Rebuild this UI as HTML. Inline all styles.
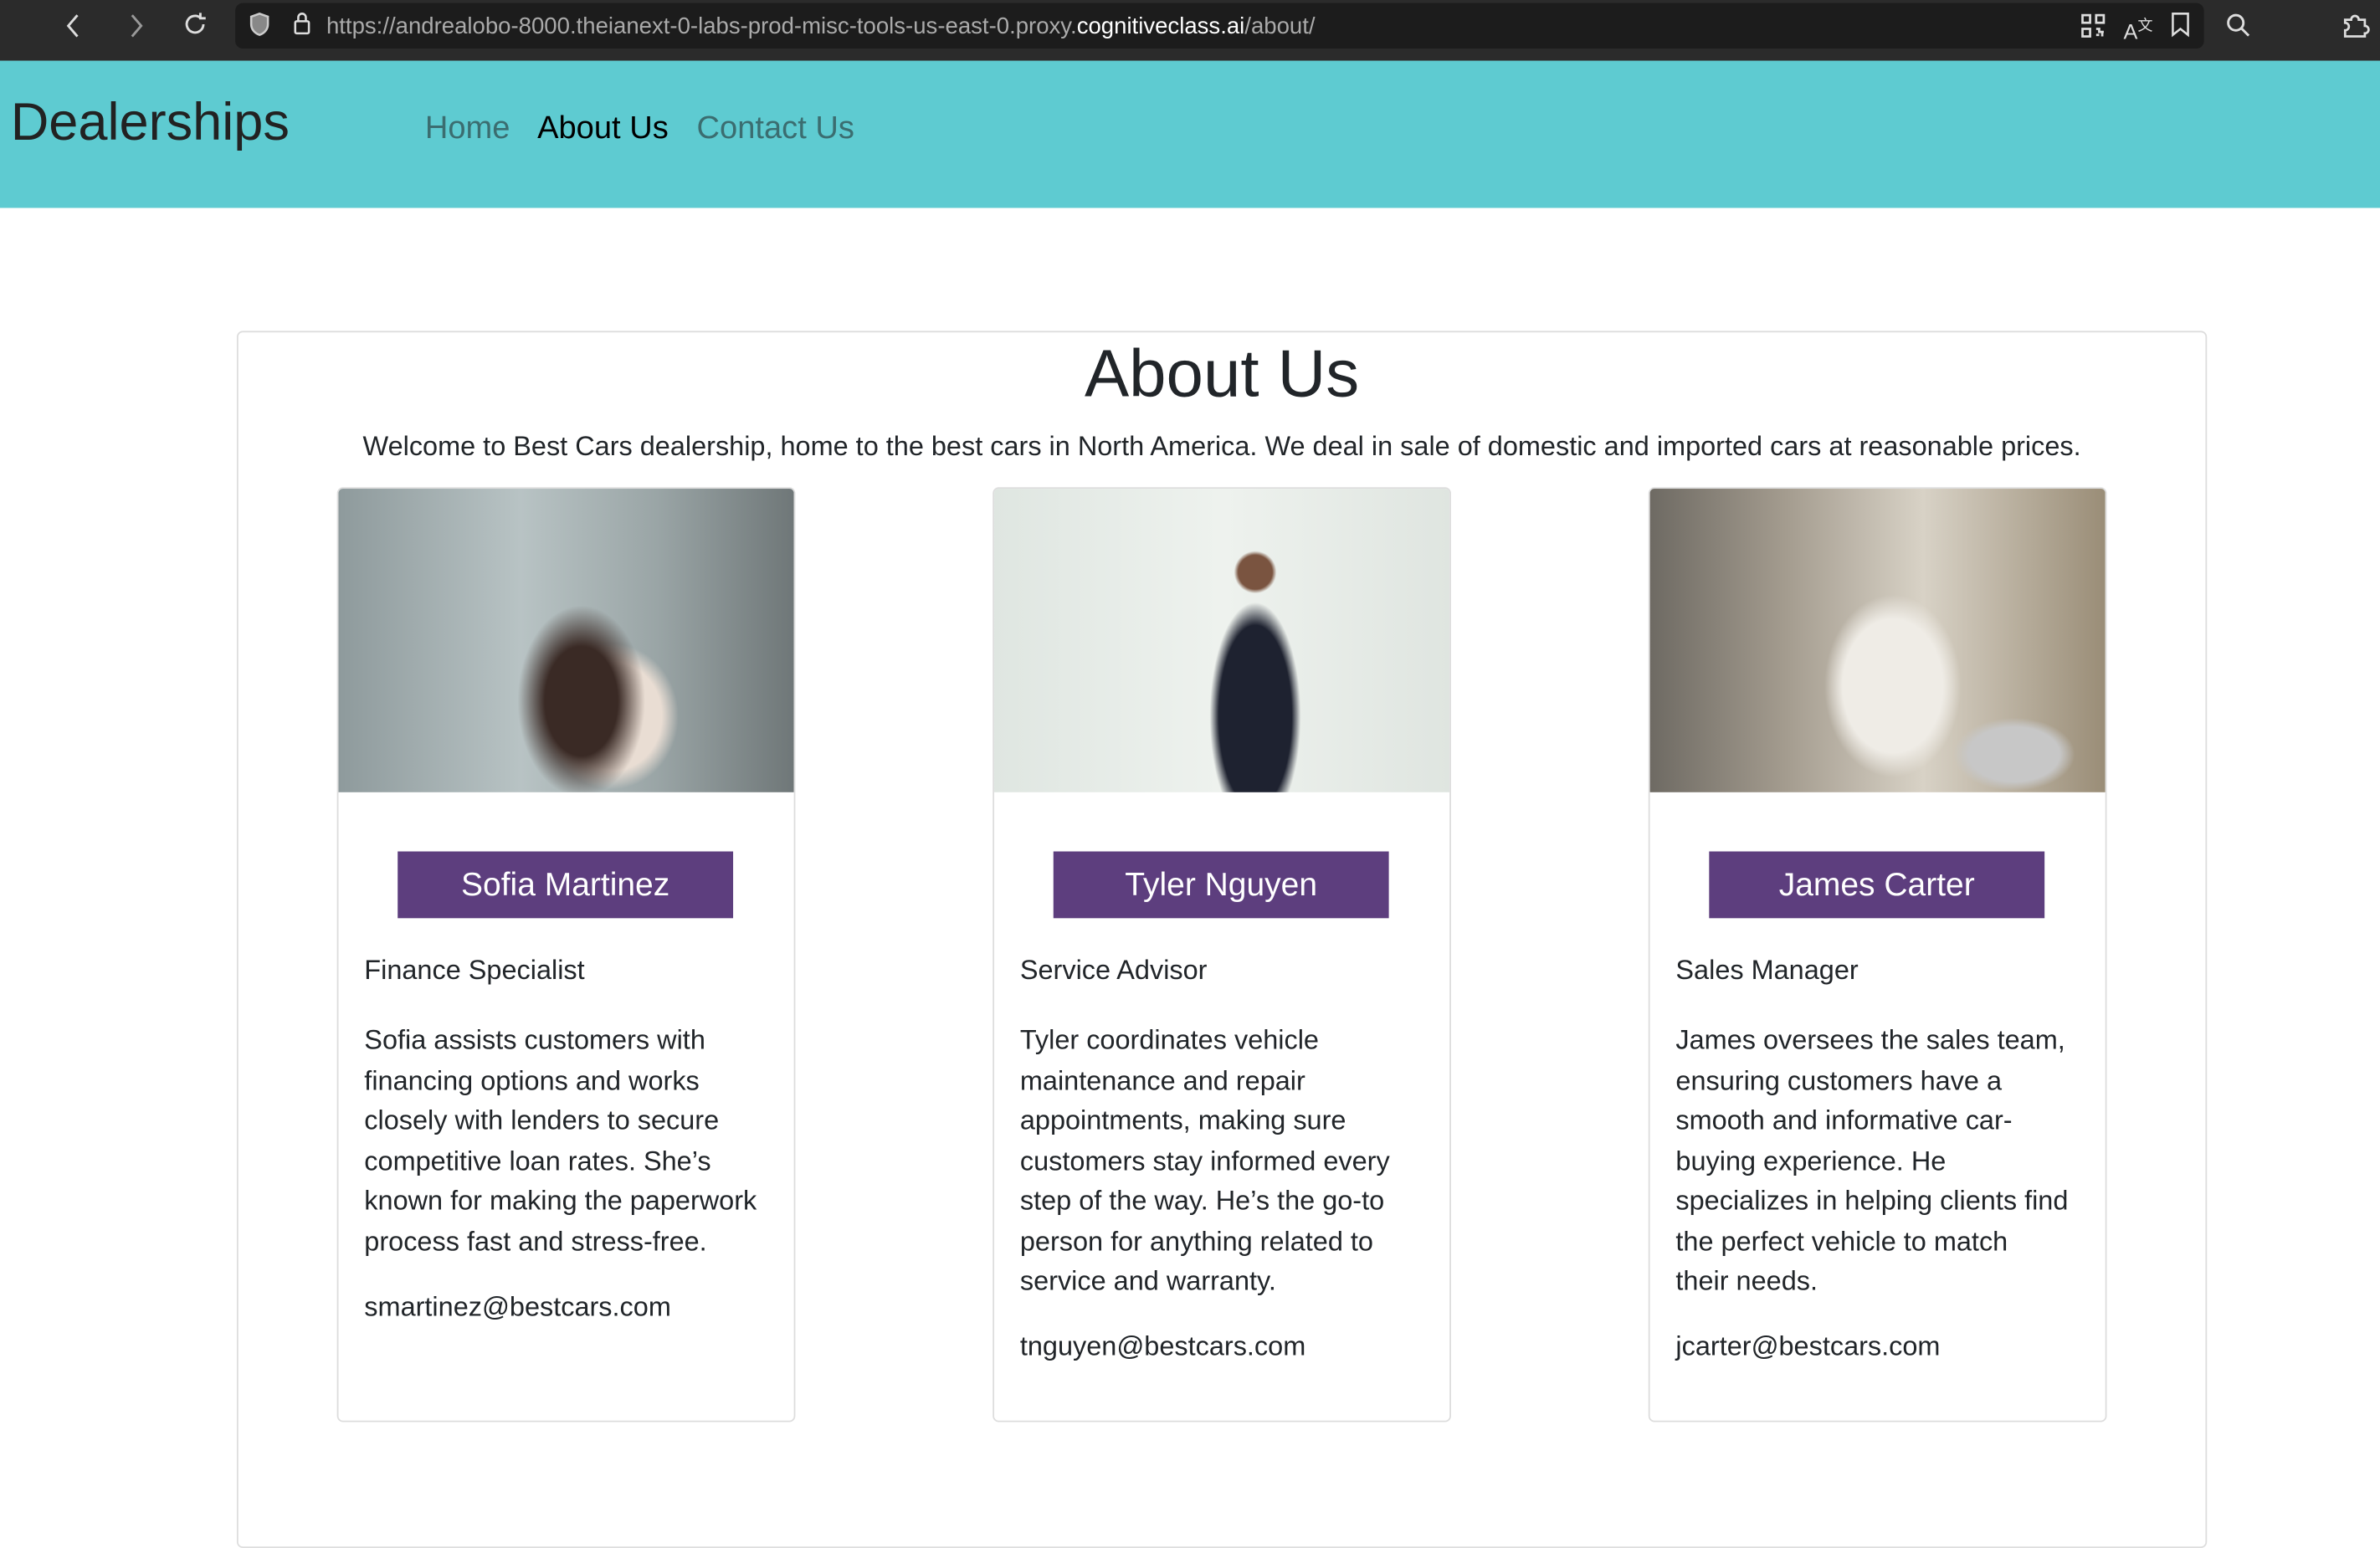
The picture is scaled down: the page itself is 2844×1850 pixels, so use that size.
<!DOCTYPE html>
<html><head><meta charset="utf-8"><style>
html,body{margin:0;padding:0;background:#fff;overflow:hidden;width:2844px;height:1724px}
#w{position:absolute;left:0;top:0;width:1568px;height:951px;transform:scale(1.81378);transform-origin:0 0;font-family:"Liberation Sans",sans-serif;color:#212529}
.bar{position:absolute;left:0;top:0;width:1568px;height:40px;background:#2b2b2b}
.url{position:absolute;left:155px;top:2px;width:1297px;height:30px;background:#1c1c1c;border-radius:5px}
.nav{position:absolute;left:0;top:40px;width:1568px;height:97px;background:#5ecbd1}
.abs{position:absolute}
.box{position:absolute;left:156px;top:218px;width:1296px;height:800px;border:1px solid #ddd;border-radius:4px}
.card{position:absolute;top:321px;width:300px;height:614px;border:1px solid #ddd;border-radius:4px;overflow:hidden}
.card .img{height:200px}
.btn{position:absolute;left:39px;top:239px;width:221px;height:44px;background:#5d3e7e;color:#fff;font-size:21.5px;text-align:center;line-height:44px}
.role{position:absolute;left:17px;top:307px;font-size:17.9px}
.desc{position:absolute;left:17px;top:350px;width:262px;font-size:17.9px;line-height:26.5px}
.mail{position:absolute;left:17px;font-size:17.9px}
svg{position:absolute}
</style></head><body><div id="w">
<div class="bar"></div><div class="url"></div>
<svg style="left:40px;top:8px" width="16" height="18" viewBox="0 0 16 18"><path d="M11 2L5 9l6 7" stroke="#ddd" stroke-width="1.6" fill="none"/></svg>
<svg style="left:82px;top:8px" width="16" height="18" viewBox="0 0 16 18"><path d="M5 2l6 7-6 7" stroke="#999" stroke-width="1.6" fill="none"/></svg>
<svg style="left:120px;top:7px" width="18" height="18" viewBox="0 0 18 18"><path d="M14 9a5.5 5.5 0 1 1-2-4.3M12 1.5v3.5h3.5" stroke="#ddd" stroke-width="1.6" fill="none"/></svg>
<svg style="left:164px;top:8px" width="14" height="16" viewBox="0 0 14 16"><path d="M7 1L1.5 3v5c0 3.5 2.5 6 5.5 7 3-1 5.5-3.5 5.5-7V3z" stroke="#ccc" stroke-width="1.4" fill="#888"/></svg>
<svg style="left:193px;top:7px" width="12" height="17" viewBox="0 0 12 17"><rect x="1.5" y="7" width="9" height="8" rx="1" stroke="#ddd" stroke-width="1.4" fill="none"/><path d="M3.5 7V4.5a2.5 2.5 0 0 1 5 0V7" stroke="#ddd" stroke-width="1.4" fill="none"/></svg>
<div class="abs" style="left:215px;top:9px;font-size:15.2px;color:#aaa;white-space:nowrap">https://andrealobo-8000.theianext-0-labs-prod-misc-tools-us-east-0.proxy.<span style="color:#fff">cognitiveclass.ai</span>/about/</div>
<svg style="left:1371px;top:9px" width="16" height="16" viewBox="0 0 16 16" fill="none" stroke="#ddd" stroke-width="1.5"><rect x="1" y="1" width="5" height="5"/><rect x="10" y="1" width="5" height="5"/><rect x="1" y="10" width="5" height="5"/><path d="M10 10h2v2h3M10 14h2M14 12v3"/></svg>
<div class="abs" style="left:1399px;top:8px;font-size:14px;color:#ddd">A<sup style="font-size:10px">文</sup></div>
<svg style="left:1430px;top:8px" width="13" height="17" viewBox="0 0 13 17"><path d="M1.5 1h10v14l-5-4-5 4z" stroke="#ddd" stroke-width="1.4" fill="none"/></svg>
<svg style="left:1466px;top:8px" width="17" height="17" viewBox="0 0 17 17"><circle cx="7" cy="7" r="5" stroke="#ddd" stroke-width="1.6" fill="none"/><path d="M11 11l4.5 4.5" stroke="#ddd" stroke-width="1.6"/></svg>
<svg style="left:1542px;top:6px" width="20" height="20" viewBox="0 0 20 20"><path d="M3 7h4a2.5 2.5 0 1 1 5 0h4v4a2.5 2.5 0 1 1 0 5v2H3v-4a2.5 2.5 0 1 0 0-5z" stroke="#ddd" stroke-width="1.5" fill="none"/></svg>
<div class="nav"></div>
<div class="abs" style="left:7px;top:61px;font-size:34.8px;color:#222">Dealerships</div>
<div class="abs" style="left:280px;top:73px;font-size:21px;color:#3b6d70">Home</div>
<div class="abs" style="left:354px;top:73px;font-size:21px;color:#000">About Us</div>
<div class="abs" style="left:459px;top:73px;font-size:21px;color:#3b6d70">Contact Us</div>
<div class="box"></div>
<div class="abs" style="left:156px;width:1298px;top:222px;text-align:center;font-size:44px;color:#212529">About Us</div>
<div class="abs" style="left:156px;width:1298px;top:284px;text-align:center;font-size:17.9px">Welcome to Best Cars dealership, home to the best cars in North America. We deal in sale of domestic and imported cars at reasonable prices.</div>

<div class="card" style="left:222px"><div class="img" style="background:radial-gradient(ellipse 60px 90px at 160px 140px,#3a2a25 40%,transparent 70%),radial-gradient(ellipse 55px 60px at 180px 150px,#e9ddd3 60%,transparent 80%),linear-gradient(90deg,#8e9a9c,#b8c3c4 40%,#9aa5a6 70%,#6f7778)"></div>
<div class="btn">Sofia Martinez</div><div class="role">Finance Specialist</div>
<div class="desc">Sofia assists customers with financing options and works closely with lenders to secure competitive loan rates. She’s known for making the paperwork process fast and stress-free.</div>
<div class="mail" style="top:529px">smartinez@bestcars.com</div></div>

<div class="card" style="left:654px"><div class="img" style="background:radial-gradient(ellipse 40px 100px at 172px 150px,#1e2230 60%,transparent 75%),radial-gradient(circle 14px at 172px 55px,#7a5440 80%,transparent 100%),linear-gradient(90deg,#dfe6e1,#eef2ee 50%,#dfe5e0)"></div>
<div class="btn">Tyler Nguyen</div><div class="role">Service Advisor</div>
<div class="desc">Tyler coordinates vehicle maintenance and repair appointments, making sure customers stay informed every step of the way. He’s the go-to person for anything related to service and warranty.</div>
<div class="mail" style="top:555px">tnguyen@bestcars.com</div></div>

<div class="card" style="left:1086px"><div class="img" style="background:radial-gradient(ellipse 60px 80px at 160px 130px,#efece6 55%,transparent 75%),radial-gradient(ellipse 50px 30px at 240px 175px,#c7c7c7 60%,transparent 80%),linear-gradient(90deg,#6e6a63,#a49c8f 30%,#d8d2c6 60%,#9a8d77)"></div>
<div class="btn">James Carter</div><div class="role">Sales Manager</div>
<div class="desc">James oversees the sales team, ensuring customers have a smooth and informative car-buying experience. He specializes in helping clients find the perfect vehicle to match<br>their needs.</div>
<div class="mail" style="top:555px">jcarter@bestcars.com</div></div>
</div></body></html>
